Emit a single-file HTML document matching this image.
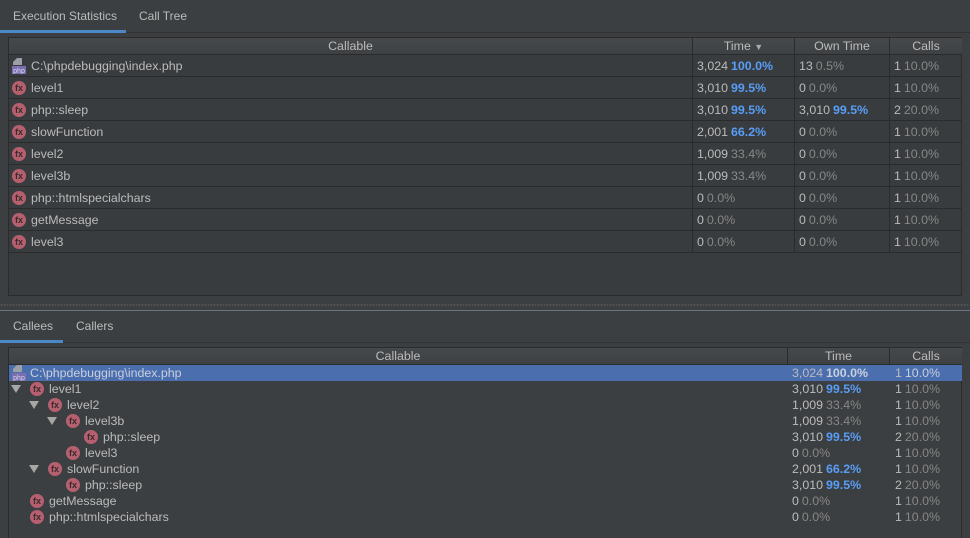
<!DOCTYPE html>
<html><head><meta charset="utf-8"><style>
*{margin:0;padding:0;box-sizing:border-box}
body{width:970px;height:538px;background:#3c3f41;font-family:"Liberation Sans",sans-serif;font-size:12.4px;color:#bbbbbb;position:relative;overflow:hidden}
.a{position:absolute;white-space:nowrap}
.tab{position:absolute;font-size:12px;color:#bbb}
.hdr{position:absolute;height:17px;background:linear-gradient(#46494b,#3e4143);border-bottom:1px solid #2b2b2b;}
.hc{position:absolute;top:0;height:17px;line-height:17px;text-align:center;border-right:1px solid #2b2b2b;color:#bbb}
.row{position:absolute;left:9px;width:953px;border-bottom:1px solid #2b2b2b}
.vl{position:absolute;width:1px;background:#2b2b2b}
.fx{position:absolute;width:14px;height:14px;border-radius:50%;background:#b6606f;color:#3a2b2e;font-size:9px;line-height:14px;text-align:center;font-weight:bold}
.php{position:absolute;width:16px;height:16px}
.b{color:#589df6;font-weight:bold}
.g{color:#878787}
.s{margin-left:3px}
.tri{position:absolute;width:0;height:0;border-left:5px solid transparent;border-right:5px solid transparent;border-top:8px solid #a6a6a6}
</style></head><body>
<div class="tab" style="left:13px;top:9px">Execution Statistics</div>
<div class="tab" style="left:139px;top:9px">Call Tree</div>
<div class="a" style="left:0;top:30px;width:126px;height:3px;background:#4a88c7"></div>
<div class="a" style="left:126px;top:32px;width:844px;height:1px;background:#323232"></div>

<div class="a" style="left:8px;top:37px;width:954px;height:259px;background:#393c3e;border:1px solid #2b2b2b"></div>
<div class="hdr" style="left:9px;top:38px;width:953px">
<div class="hc" style="left:0;width:684px">Callable</div>
<div class="hc" style="left:684px;width:102px">Time <span style="font-size:9px;color:#aaa">&#9660;</span></div>
<div class="hc" style="left:786px;width:95px">Own Time</div>
<div class="hc" style="left:881px;width:72px;border-right:none">Calls</div>
</div>
<div id="topt"></div>

<div class="a" style="left:0;top:304px;width:970px;height:2px;background-image:radial-gradient(circle,#555 0.8px,transparent 1px);background-size:3px 2px"></div>
<div class="a" style="left:0;top:310px;width:970px;height:1px;background:#6b7480"></div>

<div class="tab" style="left:13px;top:319px">Callees</div>
<div class="tab" style="left:76px;top:319px">Callers</div>
<div class="a" style="left:0;top:340px;width:63px;height:3px;background:#4a88c7"></div>
<div class="a" style="left:63px;top:342px;width:907px;height:1px;background:#323232"></div>

<div class="a" style="left:8px;top:347px;width:954px;height:191px;border:1px solid #2b2b2b;border-bottom:none"></div>
<div class="hdr" style="left:9px;top:348px;width:953px">
<div class="hc" style="left:0;width:779px">Callable</div>
<div class="hc" style="left:779px;width:102px">Time</div>
<div class="hc" style="left:881px;width:72px;border-right:none">Calls</div>
</div>
<div id="bott"></div>

<script>
(function(){
function php(x,y){return '<svg class="php" style="left:'+x+'px;top:'+y+'px" viewBox="0 0 16 16"><path d="M6 0h5v7H2V4z" fill="#9aa0a6"/><rect x="1" y="8" width="14" height="8" fill="#7b6fb0"/><text x="8" y="15" font-size="7" text-anchor="middle" fill="#d8d4ee" font-family="Liberation Sans">php</text></svg>'}
function fx(x,y){return '<div class="fx" style="left:'+x+'px;top:'+y+'px">fx</div>'}
function pct(p,bold){return bold?'<span class="b s">'+p+'</span>':'<span class="g s">'+p+'</span>'}
var rowsT=[
['php','C:\\phpdebugging\\index.php','3,024','100.0%',1,'13','0.5%',0,'1','10.0%'],
['fx','level1','3,010','99.5%',1,'0','0.0%',0,'1','10.0%'],
['fx','php::sleep','3,010','99.5%',1,'3,010','99.5%',1,'2','20.0%'],
['fx','slowFunction','2,001','66.2%',1,'0','0.0%',0,'1','10.0%'],
['fx','level2','1,009','33.4%',0,'0','0.0%',0,'1','10.0%'],
['fx','level3b','1,009','33.4%',0,'0','0.0%',0,'1','10.0%'],
['fx','php::htmlspecialchars','0','0.0%',0,'0','0.0%',0,'1','10.0%'],
['fx','getMessage','0','0.0%',0,'0','0.0%',0,'1','10.0%'],
['fx','level3','0','0.0%',0,'0','0.0%',0,'1','10.0%']];
var h='';
rowsT.forEach(function(r,i){var y=55+i*22;
h+='<div class="row" style="top:'+y+'px;height:22px"></div>';
h+=(r[0]=='php'?php(11,y+3):fx(12,y+4));
h+='<div class="a" style="left:31px;top:'+(y+4)+'px">'+r[1]+'</div>';
h+='<div class="a" style="left:697px;top:'+(y+4)+'px">'+r[2]+pct(r[3],r[4])+'</div>';
h+='<div class="a" style="left:799px;top:'+(y+4)+'px">'+r[5]+pct(r[6],r[7])+'</div>';
h+='<div class="a" style="left:894px;top:'+(y+4)+'px">'+r[8]+'<span class="g s">'+r[9]+'</span></div>';
});
h+='<div class="vl" style="left:692px;top:55px;height:198px"></div><div class="vl" style="left:794px;top:55px;height:198px"></div><div class="vl" style="left:889px;top:55px;height:198px"></div>';
document.getElementById('topt').innerHTML=h;
var rowsB=[
[0,0,'php','C:\\phpdebugging\\index.php','3,024','100.0%',1,'1','10.0%'],
[1,1,'fx','level1','3,010','99.5%',1,'1','10.0%'],
[2,1,'fx','level2','1,009','33.4%',0,'1','10.0%'],
[3,1,'fx','level3b','1,009','33.4%',0,'1','10.0%'],
[4,0,'fx','php::sleep','3,010','99.5%',1,'2','20.0%'],
[3,0,'fx','level3','0','0.0%',0,'1','10.0%'],
[2,1,'fx','slowFunction','2,001','66.2%',1,'1','10.0%'],
[3,0,'fx','php::sleep','3,010','99.5%',1,'2','20.0%'],
[1,0,'fx','getMessage','0','0.0%',0,'1','10.0%'],
[1,0,'fx','php::htmlspecialchars','0','0.0%',0,'1','10.0%']];
h='';
rowsB.forEach(function(r,i){var y=365+i*16;
if(i==0)h+='<div class="a" style="left:9px;top:'+y+'px;width:953px;height:16px;background:#4b6eaf"></div>';
var ix=12+18*r[0]; if(r[0]==0)ix=11;
if(r[1])h+='<div class="tri" style="left:'+(ix-19)+'px;top:'+(y+4)+'px"></div>';
h+=(r[2]=='php'?php(ix,y):fx(ix,y+1));
var tc=i==0?'#c8d0dc':'#bbb';
h+='<div class="a" style="left:'+(ix+19)+'px;top:'+(y+1)+'px;color:'+tc+'">'+r[3]+'</div>';
var pc=i==0?'<span class="s" style="font-weight:bold;color:#c8d0dc">'+r[5]+'</span>':pct(r[5],r[6]);
h+='<div class="a" style="left:792px;top:'+(y+1)+'px">'+r[4]+pc+'</div>';
h+='<div class="a" style="left:895px;top:'+(y+1)+'px">'+r[7]+'<span class="g s" '+(i==0?'style="color:#c8d0dc"':'')+'>'+r[8]+'</span></div>';
});
document.getElementById('bott').innerHTML=h;
})();
</script>
</body></html>
